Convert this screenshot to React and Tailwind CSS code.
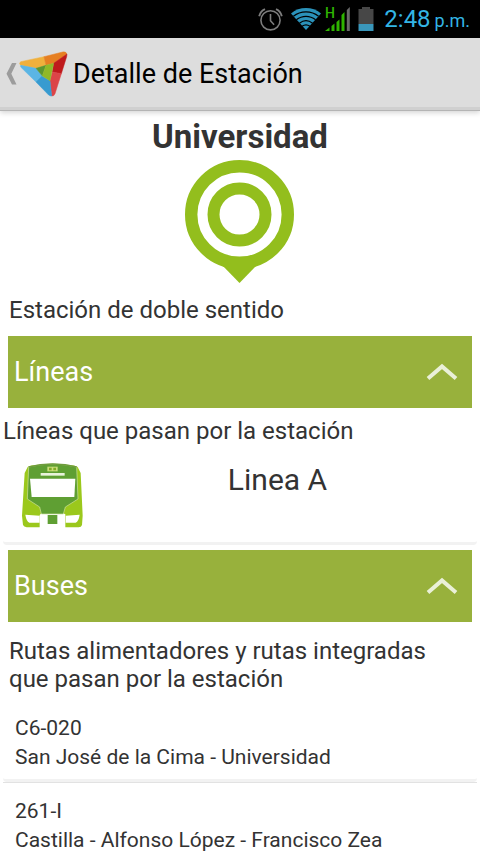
import React, { useState } from 'react'

const lines = ['Linea A']

const routes = [
    { code: 'C6-020', name: 'San José de la Cima - Universidad' },
    { code: '261-I', name: 'Castilla - Alfonso López - Francisco Zea' },
]

function AlarmIcon() {
    return (
        <svg viewBox="0 0 25 24" className="w-[25px] h-6 mr-2" fill="none" stroke="#7d7d7d" strokeWidth="1.6">
            <circle cx="12.5" cy="13.3" r="9.6" />
            <path d="M12.5 7v6.8l3.6 4" />
            <path d="M1.2 9.2C2 6 4.4 3.4 7 2.2M23.8 9.2C23 6 20.6 3.4 18 2.2" strokeWidth="1.9" />
        </svg>
    )
}

function WifiIcon() {
    return (
        <svg viewBox="0 0 30 24" className="w-[30px] h-6 mr-1">
            <path d="M15 23L0 6.4C8.4 -.8 21.6 -.8 30 6.4Z" fill="#2b92ba" />
            <g fill="none" stroke="#000" strokeWidth="1.2">
                <path d="M2.4 9.2C9.6 3.3 20.4 3.3 27.6 9.2" />
                <path d="M5.4 12.8C11.2 8.2 18.8 8.2 24.6 12.8" />
                <path d="M8.4 16.2C12.4 13.2 17.6 13.2 21.6 16.2" />
                <path d="M11 19.2C13.4 17.5 16.6 17.5 19 19.2" />
            </g>
        </svg>
    )
}

function SignalIcon() {
    return (
        <svg viewBox="0 -5 25 34" className="w-[25px] h-[34px] mr-2">
            <text x="0" y="11" fontSize="14" fontWeight="500" fill="#2fb400">H</text>
            <g fill="#2fb400">
                <path d="M0 24L4.5 20.5v3.5z" />
                <path d="M6.5 19l3-2.5v7.5h-3z" />
                <path d="M11.5 15l3-2.5v11.5h-3z" />
                <path d="M16.5 8l3-3v19h-3z" />
            </g>
            <path d="M21.8 3l3-3v24h-3z" fill="#6a6a6a" />
        </svg>
    )
}

function BatteryIcon() {
    return (
        <svg viewBox="0 0 16 24" className="w-4 h-6 mr-[10px]">
            <path d="M4 0h8v2h3.5v15H.5V2H4z" fill="#474747" />
            <path d="M.5 17h15v7H.5z" fill="#3a97bb" />
        </svg>
    )
}

function StatusBar() {
    return (
        <div className="flex h-[38px] items-center justify-end bg-black pr-[10px]">
            <AlarmIcon />
            <WifiIcon />
            <SignalIcon />
            <BatteryIcon />
            <div className="flex items-baseline gap-1 text-[#33b5e5]">
                <span className="text-[24px] leading-[28px]">2:48</span>
                <span className="text-[18px]">p.m.</span>
            </div>
        </div>
    )
}

const logoFacets = [
    { color: '#f0b03c', d: 'M62 77L132 62L138 88L108 97L62 88Q56 82 62 77Z' },
    { color: '#e67f22', d: 'M132 62L188 48Q198 46 201 54L161 82L138 88Z' },
    { color: '#bf1a1c', d: 'M201 54L200 62L184 113L157 108L161 82Z' },
    { color: '#dc4548', d: 'M184 113L165 173Q162 181 155 180L150 134L157 108Z' },
    { color: '#5bb5e4', d: 'M62 88L108 97L126 120L108 138L62 93Z' },
    { color: '#379bd0', d: 'M108 138L126 120L150 134L155 180Q150 180 146 177Z' },
    { color: '#5c9630', d: 'M108 97L138 88L127 120Z' },
    { color: '#90b827', d: 'M138 88L161 82L150 134L127 120Z' },
]

function AppLogo() {
    return (
        <svg viewBox="57 45 147 138" className="w-[49px] h-[46px]">
            {logoFacets.map((facet) => (
                <path key={facet.color} d={facet.d} fill={facet.color} stroke={facet.color} strokeWidth="1.5" strokeLinejoin="round" />
            ))}
        </svg>
    )
}

function ActionBar() {
    return (
        <header className="flex h-[73px] items-center border-b border-[#b4b4b4] bg-[#dddddd] pl-[6px] shadow-[inset_0_-3px_0_#d0d0d0,0_2px_5px_rgba(0,0,0,0.16)]">
            <a href="#inicio" aria-label="Volver" className="flex items-center gap-[2px]">
                <svg viewBox="0 0 11 22" className="w-[11px] h-[22px]">
                    <path d="M6 0H10.5L5.3 10.8L10.5 21.5H6L.5 10.8Z" fill="#9c9c9c" />
                </svg>
                <AppLogo />
            </a>
            <h1 className="ml-[5px] text-[27px] leading-[32px] text-black">Detalle de Estación</h1>
        </header>
    )
}

function StationPin() {
    return (
        <svg viewBox="0 0 110 124" className="mx-auto w-[110px] h-[124px]">
            <circle cx="54.5" cy="55.5" r="48.3" fill="#fff" stroke="#93be1d" strokeWidth="12.4" />
            <path d="M36 105L54.5 124L73 105L64 98H45Z" fill="#93be1d" />
            <circle cx="54.5" cy="55.5" r="26" fill="none" stroke="#93be1d" strokeWidth="12" />
        </svg>
    )
}

function TrainIcon() {
    return (
        <svg viewBox="63 160 189 198" className="w-[63px] h-[66px]">
            <path d="M83 172Q88 166 120 165Q158 160 196 165Q228 166 233 172L242 190L248 318L246 346Q244 353 236 353H196V314L190 311H124L119 316V353H80Q72 352 69 346L66 318L74 190Z" fill="#9bc81c" />
            <path d="M86 172Q120 163 158 163Q196 163 230 172L234 268L196 292L190 313H124L119 292L82 268Z" fill="#5f9f33" stroke="#cfe3a2" strokeWidth="2" />
            <path d="M86 172Q120 163 158 163Q196 163 230 172" fill="none" stroke="#6f9c3d" strokeWidth="5" />
            <path d="M90 207H226L223 262H95Z" fill="#fff" />
            <path d="M122 190H194V198H122Z" fill="#e9f3db" />
            <path d="M142 171H173V185H142Z" fill="#c9de79" />
            <path d="M147 174H155V182H147ZM160 174H168V182H160Z" fill="#82ac25" />
            <path d="M76 315L119 318V339H88Q79 335 76 315ZM239 315L197 318V339H227Q236 335 239 315Z" fill="#fff" />
            <path d="M143 316H172V343H143Z" fill="#5f9f33" />
        </svg>
    )
}

function Section({ title, children }) {
    const [open, setOpen] = useState(true)

    return (
        <section>
            <div className="px-2">
                <button
                    type="button"
                    aria-expanded={open}
                    onClick={() => setOpen(!open)}
                    className="flex h-[72px] w-full items-center justify-between bg-[#98b13c] pl-[6px] pr-[14px] text-[27px] leading-[32px] text-white"
                >
                    {title}
                    <svg viewBox="0 0 32 18" className={open ? 'w-8 h-[18px]' : 'w-8 h-[18px] rotate-180'}>
                        <path d="M2 15.5L16 3.5L30 15.5" fill="none" stroke="#eaf0d8" strokeWidth="4" />
                    </svg>
                </button>
            </div>
            {open && children}
        </section>
    )
}

export default function App() {
    return (
        <div className="min-h-screen bg-white font-['Roboto',sans-serif] text-[#333333]">
            <StatusBar />
            <ActionBar />
            <main>
                <h2 className="pt-1 text-center text-[33px] leading-[44px] font-bold">Universidad</h2>
                <StationPin />
                <p className="px-[9px] pt-[13px] pb-3 text-[24px] leading-[28px]">Estación de doble sentido</p>

                <Section title="Líneas">
                    <p className="px-[3px] pt-[9px] text-[24px] leading-[28px]">Líneas que pasan por la estación</p>
                    <ul className="mx-[3px] mb-[5px]">
                        {lines.map((line) => (
                            <li key={line} className="flex h-[100px] items-start rounded-b border-b-3 border-[#f2f2f2] pt-[18px] pl-[18px]">
                                <TrainIcon />
                                <span className="flex-1 pr-[6px] text-center text-[30px] leading-[34px]">{line}</span>
                            </li>
                        ))}
                    </ul>
                </Section>

                <Section title="Buses">
                    <p className="px-[9px] pt-[15px] pb-[7px] text-[24px] leading-[28px]">
                        Rutas alimentadores y rutas integradas que pasan por la estación
                    </p>
                    <ul className="mx-[3px]">
                        {routes.map((route) => (
                            <li key={route.code} className="border-b border-[#e2e2e2]">
                                <div className="rounded-b border-b-3 border-[#f2f2f2] px-3 pt-[14px] pb-[7px] text-[21px] leading-[29px]">
                                    <p>{route.code}</p>
                                    <p>{route.name}</p>
                                </div>
                            </li>
                        ))}
                    </ul>
                </Section>
            </main>
        </div>
    )
}
